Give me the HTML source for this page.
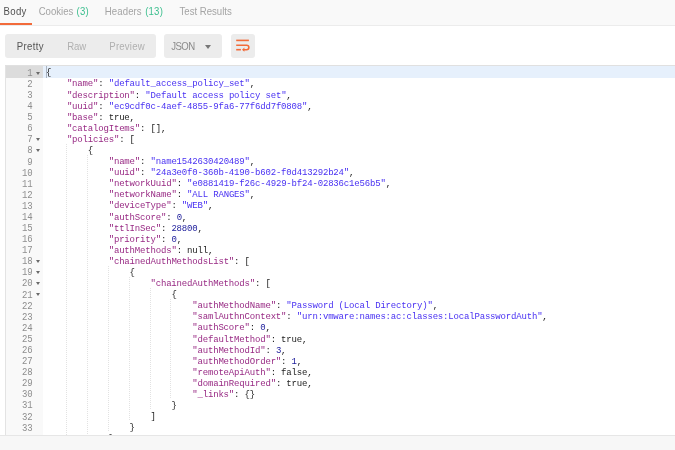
<!DOCTYPE html>
<html><head><meta charset="utf-8">
<style>
html,body{margin:0;padding:0;}
body{width:675px;height:450px;overflow:hidden;position:relative;background:#fff;font-family:"Liberation Sans",sans-serif;}
.wrap{position:absolute;left:-10px;top:-10px;width:695px;height:470px;filter:blur(0.35px);background:#fff;}
.inner{position:absolute;left:10px;top:10px;width:675px;height:450px;}
.tabs{position:absolute;left:-10px;top:-10px;width:695px;height:35px;background:#f9f9f9;border-bottom:1px solid #ececec;}
.tab{position:absolute;top:6.2px;font-size:9.6px;line-height:12px;color:#a4a4a4;white-space:nowrap;transform:scaleY(1.12);transform-origin:0 9.3px;}
.tab b{font-weight:normal;color:#3dbf8f;}
.ul{position:absolute;left:-10px;top:23px;width:42px;height:2px;background:#f26b3a;}
.btn{position:absolute;top:34px;height:24px;background:#ececec;border-radius:3px;}
.bt{position:absolute;top:41px;font-size:9.6px;line-height:12px;color:#b0b0b0;white-space:nowrap;transform:scaleY(1.12);transform-origin:0 9.3px;}
.edtop{position:absolute;left:5px;top:65px;width:680px;height:1px;background:#e0e0e0;}
.gutter{position:absolute;left:5px;top:66px;width:37px;height:369px;background:#f9f9f9;border-left:1px solid #e3e3e3;}
.al{position:absolute;left:43px;top:66px;width:642px;height:11.6px;background:#e6f0fc;}
.ag{position:absolute;left:6px;top:66px;width:37px;height:11.6px;background:#dcdcdc;}
.gl{position:absolute;left:6px;width:26.5px;padding-top:2.2px;text-align:right;font-family:"Liberation Mono",monospace;font-size:9.0px;letter-spacing:-0.176px;line-height:11.09px;height:11.09px;color:#8e8e8e;white-space:pre;}
.nm{display:inline-block;position:relative;top:0.6px;transform:scaleY(1.17);transform-origin:0 8.4px;}
.fa{position:absolute;left:29.5px;top:5.5px;width:0;height:0;border-left:2.4px solid transparent;border-right:2.4px solid transparent;border-top:3px solid #6a6a6a;}
.cl{position:absolute;padding-top:2.4px;font-family:"Liberation Mono",monospace;font-size:9.0px;letter-spacing:-0.176px;line-height:11.09px;height:11.09px;color:#222;white-space:pre;}
.k{color:#982a84;}
.s{color:#4830f2;}
.n{color:#1a1a9a;}
.ig{position:absolute;width:1px;background:repeating-linear-gradient(to bottom,#e2e2e2 0 1px,transparent 1px 2px);}
.cur{position:absolute;left:46px;top:66px;width:1.4px;height:11.6px;background:#a9b3c0;}
.bottom{position:absolute;left:-10px;top:435px;width:695px;height:25px;background:#f7f7f7;border-top:1px solid #e6e6e6;}
</style></head><body><div class="wrap"><div class="inner">
<div class="tabs"></div>
<div class="tab" style="left:3.6px;color:#505050;letter-spacing:0.3px">Body</div>
<div class="tab" style="left:38.7px">Cookies</div><div class="tab" style="left:76.5px;letter-spacing:0.2px"><b>(3)</b></div>
<div class="tab" style="left:104.8px;letter-spacing:0.1px">Headers</div><div class="tab" style="left:145.2px;letter-spacing:0.2px"><b>(13)</b></div>
<div class="tab" style="left:179.5px">Test Results</div>
<div class="ul"></div>

<div class="btn" style="left:5px;width:151px"></div>
<div class="bt" style="left:16.7px;color:#555;letter-spacing:0.35px">Pretty</div>
<div class="bt" style="left:67.2px;letter-spacing:-0.1px">Raw</div>
<div class="bt" style="left:109.3px;letter-spacing:0.2px">Preview</div>
<div class="btn" style="left:164px;width:58px"></div>
<div class="bt" style="left:171.3px;color:#8a8a8a;letter-spacing:-0.6px">JSON</div>
<div style="position:absolute;left:205px;top:44.5px;width:0;height:0;border-left:3.2px solid transparent;border-right:3.2px solid transparent;border-top:4px solid #777"></div>
<div class="btn" style="left:231px;width:24px"></div>
<svg style="position:absolute;left:231px;top:34px" width="24" height="24" viewBox="0 0 24 24">
<g stroke="#f26b3a" stroke-width="1.6" fill="none" stroke-linecap="butt">
<path d="M5.2 6.4H17.9"/>
<path d="M5.2 11.2H15.6A2.25 2.25 0 0 1 15.6 15.7H12.4"/>
<path d="M5.2 15.7H9.9"/>
</g>
<path d="M11 15.7L13.4 13.6V17.8Z" fill="#f26b3a"/>
</svg>

<div class="edtop"></div>
<div class="gutter"></div>
<div class="al"></div>
<div class="ag"></div>
<div class="ig" style="left:66.40px;top:143.63px;height:299.43px"></div><div class="ig" style="left:87.20px;top:154.72px;height:288.34px"></div><div class="ig" style="left:108.00px;top:265.62px;height:166.35px"></div><div class="ig" style="left:128.80px;top:276.71px;height:144.17px"></div><div class="ig" style="left:149.60px;top:287.80px;height:121.99px"></div><div class="ig" style="left:170.40px;top:298.89px;height:99.81px"></div>
<div class="gl" style="top:66.00px"><span class="nm">1</span><i class="fa"></i></div><div class="gl" style="top:77.09px"><span class="nm">2</span></div><div class="gl" style="top:88.18px"><span class="nm">3</span></div><div class="gl" style="top:99.27px"><span class="nm">4</span></div><div class="gl" style="top:110.36px"><span class="nm">5</span></div><div class="gl" style="top:121.45px"><span class="nm">6</span></div><div class="gl" style="top:132.54px"><span class="nm">7</span><i class="fa"></i></div><div class="gl" style="top:143.63px"><span class="nm">8</span><i class="fa"></i></div><div class="gl" style="top:154.72px"><span class="nm">9</span></div><div class="gl" style="top:165.81px"><span class="nm">10</span></div><div class="gl" style="top:176.90px"><span class="nm">11</span></div><div class="gl" style="top:187.99px"><span class="nm">12</span></div><div class="gl" style="top:199.08px"><span class="nm">13</span></div><div class="gl" style="top:210.17px"><span class="nm">14</span></div><div class="gl" style="top:221.26px"><span class="nm">15</span></div><div class="gl" style="top:232.35px"><span class="nm">16</span></div><div class="gl" style="top:243.44px"><span class="nm">17</span></div><div class="gl" style="top:254.53px"><span class="nm">18</span><i class="fa"></i></div><div class="gl" style="top:265.62px"><span class="nm">19</span><i class="fa"></i></div><div class="gl" style="top:276.71px"><span class="nm">20</span><i class="fa"></i></div><div class="gl" style="top:287.80px"><span class="nm">21</span><i class="fa"></i></div><div class="gl" style="top:298.89px"><span class="nm">22</span></div><div class="gl" style="top:309.98px"><span class="nm">23</span></div><div class="gl" style="top:321.07px"><span class="nm">24</span></div><div class="gl" style="top:332.16px"><span class="nm">25</span></div><div class="gl" style="top:343.25px"><span class="nm">26</span></div><div class="gl" style="top:354.34px"><span class="nm">27</span></div><div class="gl" style="top:365.43px"><span class="nm">28</span></div><div class="gl" style="top:376.52px"><span class="nm">29</span></div><div class="gl" style="top:387.61px"><span class="nm">30</span></div><div class="gl" style="top:398.70px"><span class="nm">31</span></div><div class="gl" style="top:409.79px"><span class="nm">32</span></div><div class="gl" style="top:420.88px"><span class="nm">33</span></div><div class="gl" style="top:431.97px"><span class="nm">34</span></div>
<div class="cur"></div>
<div class="cl" style="top:66.00px;left:46.00px">{</div><div class="cl" style="top:77.09px;left:66.90px"><span class="k">"name"</span>: <span class="s">"default_access_policy_set"</span>,</div><div class="cl" style="top:88.18px;left:66.90px"><span class="k">"description"</span>: <span class="s">"Default access policy set"</span>,</div><div class="cl" style="top:99.27px;left:66.90px"><span class="k">"uuid"</span>: <span class="s">"ec9cdf0c-4aef-4855-9fa6-77f6dd7f0808"</span>,</div><div class="cl" style="top:110.36px;left:66.90px"><span class="k">"base"</span>: true,</div><div class="cl" style="top:121.45px;left:66.90px"><span class="k">"catalogItems"</span>: [],</div><div class="cl" style="top:132.54px;left:66.90px"><span class="k">"policies"</span>: [</div><div class="cl" style="top:143.63px;left:87.79px">{</div><div class="cl" style="top:154.72px;left:108.69px"><span class="k">"name"</span>: <span class="s">"name1542630420489"</span>,</div><div class="cl" style="top:165.81px;left:108.69px"><span class="k">"uuid"</span>: <span class="s">"24a3e0f0-360b-4190-b602-f0d413292b24"</span>,</div><div class="cl" style="top:176.90px;left:108.69px"><span class="k">"networkUuid"</span>: <span class="s">"e0881419-f26c-4929-bf24-02836c1e56b5"</span>,</div><div class="cl" style="top:187.99px;left:108.69px"><span class="k">"networkName"</span>: <span class="s">"ALL RANGES"</span>,</div><div class="cl" style="top:199.08px;left:108.69px"><span class="k">"deviceType"</span>: <span class="s">"WEB"</span>,</div><div class="cl" style="top:210.17px;left:108.69px"><span class="k">"authScore"</span>: <span class="n">0</span>,</div><div class="cl" style="top:221.26px;left:108.69px"><span class="k">"ttlInSec"</span>: <span class="n">28800</span>,</div><div class="cl" style="top:232.35px;left:108.69px"><span class="k">"priority"</span>: <span class="n">0</span>,</div><div class="cl" style="top:243.44px;left:108.69px"><span class="k">"authMethods"</span>: null,</div><div class="cl" style="top:254.53px;left:108.69px"><span class="k">"chainedAuthMethodsList"</span>: [</div><div class="cl" style="top:265.62px;left:129.58px">{</div><div class="cl" style="top:276.71px;left:150.48px"><span class="k">"chainedAuthMethods"</span>: [</div><div class="cl" style="top:287.80px;left:171.38px">{</div><div class="cl" style="top:298.89px;left:192.27px"><span class="k">"authMethodName"</span>: <span class="s">"Password (Local Directory)"</span>,</div><div class="cl" style="top:309.98px;left:192.27px"><span class="k">"samlAuthnContext"</span>: <span class="s">"urn:vmware:names:ac:classes:LocalPasswordAuth"</span>,</div><div class="cl" style="top:321.07px;left:192.27px"><span class="k">"authScore"</span>: <span class="n">0</span>,</div><div class="cl" style="top:332.16px;left:192.27px"><span class="k">"defaultMethod"</span>: true,</div><div class="cl" style="top:343.25px;left:192.27px"><span class="k">"authMethodId"</span>: <span class="n">3</span>,</div><div class="cl" style="top:354.34px;left:192.27px"><span class="k">"authMethodOrder"</span>: <span class="n">1</span>,</div><div class="cl" style="top:365.43px;left:192.27px"><span class="k">"remoteApiAuth"</span>: false,</div><div class="cl" style="top:376.52px;left:192.27px"><span class="k">"domainRequired"</span>: true,</div><div class="cl" style="top:387.61px;left:192.27px"><span class="k">"_links"</span>: {}</div><div class="cl" style="top:398.70px;left:171.38px">}</div><div class="cl" style="top:409.79px;left:150.48px">]</div><div class="cl" style="top:420.88px;left:129.58px">}</div><div class="cl" style="top:431.97px;left:108.69px">},</div>
<div class="bottom"></div>
</div></div>
</body></html>
